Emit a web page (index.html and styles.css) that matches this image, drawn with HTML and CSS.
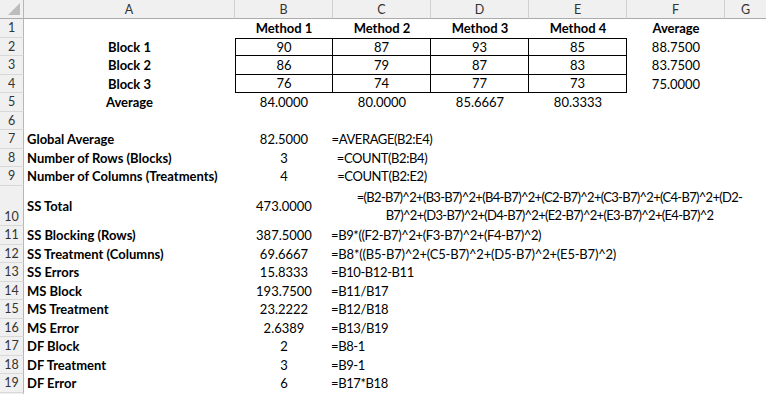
FILE: index.html
```html
<!DOCTYPE html>
<html lang="en">
<head>
<meta charset="utf-8">
<title>Randomized Block Design</title>
<link rel="stylesheet" href="styles.css">
</head>
<body>
<div class="sheet">
  <!-- column headers -->
  <div class="corner"><span class="tri"></span></div>
  <div class="ch">A</div>
  <div class="ch">B</div>
  <div class="ch">C</div>
  <div class="ch">D</div>
  <div class="ch">E</div>
  <div class="ch">F</div>
  <div class="ch last">G</div>

  <!-- row 1 -->
  <div class="rh">1</div>
  <div class="c"></div>
  <div class="c b ctr">Method 1</div>
  <div class="c b ctr">Method 2</div>
  <div class="c b ctr">Method 3</div>
  <div class="c b ctr">Method 4</div>
  <div class="c b ctr">Average</div>
  <div class="c"></div>

  <!-- row 2 -->
  <div class="rh">2</div>
  <div class="c b ctr">Block 1</div>
  <div class="c ctr box top first">90</div>
  <div class="c ctr box top">87</div>
  <div class="c ctr box top">93</div>
  <div class="c ctr box top">85</div>
  <div class="c ctr">88.7500</div>
  <div class="c"></div>

  <!-- row 3 -->
  <div class="rh">3</div>
  <div class="c b ctr">Block 2</div>
  <div class="c ctr box first">86</div>
  <div class="c ctr box">79</div>
  <div class="c ctr box">87</div>
  <div class="c ctr box">83</div>
  <div class="c ctr">83.7500</div>
  <div class="c"></div>

  <!-- row 4 -->
  <div class="rh">4</div>
  <div class="c b ctr">Block 3</div>
  <div class="c ctr box first">76</div>
  <div class="c ctr box">74</div>
  <div class="c ctr box">77</div>
  <div class="c ctr box">73</div>
  <div class="c ctr">75.0000</div>
  <div class="c"></div>

  <!-- row 5 -->
  <div class="rh">5</div>
  <div class="c b ctr">Average</div>
  <div class="c ctr">84.0000</div>
  <div class="c ctr">80.0000</div>
  <div class="c ctr">85.6667</div>
  <div class="c ctr">80.3333</div>
  <div class="c"></div>
  <div class="c"></div>

  <!-- row 6 -->
  <div class="rh">6</div>
  <div class="c span-all"></div>

  <!-- row 7 -->
  <div class="rh">7</div>
  <div class="c b lab">Global Average</div>
  <div class="c ctr">82.5000</div>
  <div class="c ctr fx">=AVERAGE(B2:E4)</div>
  <div class="c rest"></div>

  <!-- row 8 -->
  <div class="rh">8</div>
  <div class="c b lab">Number of Rows (Blocks)</div>
  <div class="c ctr">3</div>
  <div class="c ctr fx">=COUNT(B2:B4)</div>
  <div class="c rest"></div>

  <!-- row 9 -->
  <div class="rh">9</div>
  <div class="c b lab">Number of Columns (Treatments)</div>
  <div class="c ctr">4</div>
  <div class="c ctr fx">=COUNT(B2:E2)</div>
  <div class="c rest"></div>

  <!-- row 10 -->
  <div class="rh tall">10</div>
  <div class="c b lab">SS Total</div>
  <div class="c ctr">473.0000</div>
  <div class="c wrap">=(B2-B7)^2+(B3-B7)^2+(B4-B7)^2+(C2-B7)^2+(C3-B7)^2+(C4-B7)^2+(D2-<br>B7)^2+(D3-B7)^2+(D4-B7)^2+(E2-B7)^2+(E3-B7)^2+(E4-B7)^2</div>

  <!-- row 11 -->
  <div class="rh">11</div>
  <div class="c b lab">SS Blocking (Rows)</div>
  <div class="c ctr">387.5000</div>
  <div class="c f fx">=B9*((F2-B7)^2+(F3-B7)^2+(F4-B7)^2)</div>

  <!-- row 12 -->
  <div class="rh">12</div>
  <div class="c b lab">SS Treatment (Columns)</div>
  <div class="c ctr">69.6667</div>
  <div class="c f fx loose">=B8*((B5-B7)^2+(C5-B7)^2+(D5-B7)^2+(E5-B7)^2)</div>

  <!-- row 13 -->
  <div class="rh">13</div>
  <div class="c b lab">SS Errors</div>
  <div class="c ctr">15.8333</div>
  <div class="c f fx">=B10-B12-B11</div>

  <!-- row 14 -->
  <div class="rh">14</div>
  <div class="c b lab">MS Block</div>
  <div class="c ctr">193.7500</div>
  <div class="c f fx">=B11/B17</div>

  <!-- row 15 -->
  <div class="rh">15</div>
  <div class="c b lab">MS Treatment</div>
  <div class="c ctr">23.2222</div>
  <div class="c f fx">=B12/B18</div>

  <!-- row 16 -->
  <div class="rh">16</div>
  <div class="c b lab">MS Error</div>
  <div class="c ctr">2.6389</div>
  <div class="c f fx">=B13/B19</div>

  <!-- row 17 -->
  <div class="rh">17</div>
  <div class="c b lab">DF Block</div>
  <div class="c ctr">2</div>
  <div class="c f fx">=B8-1</div>

  <!-- row 18 -->
  <div class="rh">18</div>
  <div class="c b lab">DF Treatment</div>
  <div class="c ctr">3</div>
  <div class="c f fx">=B9-1</div>

  <!-- row 19 -->
  <div class="rh">19</div>
  <div class="c b lab">DF Error</div>
  <div class="c ctr">6</div>
  <div class="c f fx">=B17*B18</div>

  <!-- row 20 (cut off) -->
  <div class="rh"></div>
  <div class="c span-all"></div>
</div>
</body>
</html>
```
FILE: styles.css
```css
* { box-sizing: border-box; }

html, body {
  margin: 0;
  padding: 0;
  background: #ffffff;
  overflow: hidden;
}

.sheet {
  display: grid;
  grid-template-columns: 24px 211px repeat(5, 98px) 1fr;
  grid-template-rows: 19px repeat(9, 18.5px) 40.5px repeat(10, 18.5px);
  width: 766px;
  height: 394px;
  overflow: hidden;
  font-family: Lato, "Liberation Sans", sans-serif;
  font-size: 13px;
  color: #000;
}

.corner {
  position: relative;
  background: #f0f0f0;
  border-right: 1px solid #b6b6b6;
  border-bottom: 1px solid #ababab;
}
.corner .tri {
  position: absolute;
  right: 3px;
  bottom: 3px;
  width: 0;
  height: 0;
  border-left: 12px solid transparent;
  border-bottom: 12px solid #bdbdbd;
}

.ch {
  background: #f0f0f0;
  border-right: 1px solid #d0d0d0;
  border-bottom: 1px solid #ababab;
  color: #333;
  font-size: 12.5px;
  display: flex;
  align-items: center;
  justify-content: center;
  padding-top: 1px;
}
.ch.last { border-right: none; }

.rh {
  background: #f0f0f0;
  border-right: 1px solid #b6b6b6;
  border-bottom: 1px solid #d8d8d8;
  color: #333;
  font-size: 12.5px;
  display: flex;
  align-items: center;
  justify-content: center;
}
.rh.tall { align-items: flex-end; padding-bottom: 1px; }

.c {
  display: flex;
  align-items: center;
  white-space: nowrap;
  min-width: 0;
}
.b { font-weight: 700; }
.ctr { justify-content: center; }
.lab { padding-left: 3px; }
.fx { letter-spacing: -0.4px; }
.fx.loose { letter-spacing: -0.2px; }
.f { grid-column: 4 / -1; padding-left: 0; margin-left: -2px; }
.rest { grid-column: 5 / -1; }
.span-all { grid-column: 2 / -1; }

.wrap {
  grid-column: 4 / -1;
  white-space: normal;
  text-align: center;
  justify-content: center;
  line-height: 18px;
  letter-spacing: -0.7px;
  padding-top: 0;
}

.box {
  border-right: 1px solid #000;
  border-bottom: 1px solid #000;
}
.box.top { border-top: 1px solid #000; }
.box.first { border-left: 1px solid #000; }
```
